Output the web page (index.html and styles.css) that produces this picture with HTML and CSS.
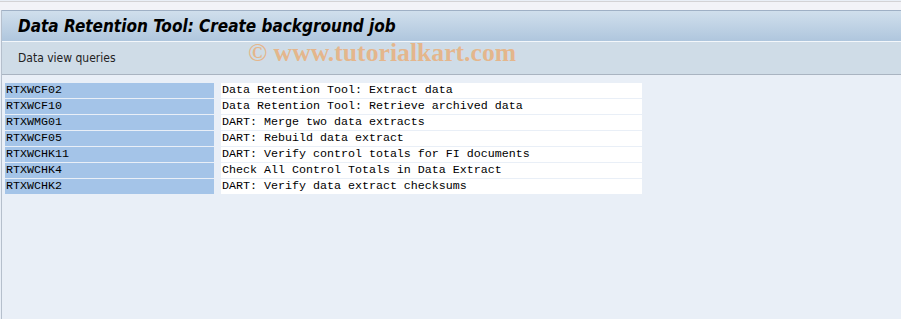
FILE: index.html
```html
<!DOCTYPE html>
<html lang="en">
<head>
  <meta charset="UTF-8" />
  <title>Data Retention Tool: Create background job</title>
  <link rel="stylesheet" href="styles.css">
</head>
<body>
  <div class="topstrip"></div>

  <div class="window">
    <header class="titlebar">
      <h1>Data Retention Tool: Create background job</h1>
    </header>

    <div class="toolbar">
      <span class="tool-btn">Data view queries</span>
      <span class="watermark">&copy; www.tutorialkart.com</span>
    </div>

    <main class="content">
      <div class="list">
        <div class="row"><span class="key">RTXWCF02</span><span class="desc">Data Retention Tool: Extract data</span></div>
        <div class="row"><span class="key">RTXWCF10</span><span class="desc">Data Retention Tool: Retrieve archived data</span></div>
        <div class="row"><span class="key">RTXWMG01</span><span class="desc">DART: Merge two data extracts</span></div>
        <div class="row"><span class="key">RTXWCF05</span><span class="desc">DART: Rebuild data extract</span></div>
        <div class="row"><span class="key">RTXWCHK11</span><span class="desc">DART: Verify control totals for FI documents</span></div>
        <div class="row"><span class="key">RTXWCHK4</span><span class="desc">Check All Control Totals in Data Extract</span></div>
        <div class="row"><span class="key">RTXWCHK2</span><span class="desc">DART: Verify data extract checksums</span></div>
      </div>
    </main>
  </div>
</body>
</html>
```

FILE: styles.css
```css
html, body {
  height: 100%;
}

body {
  margin: 0;
  background: #e9eff7;
  font-family: "DejaVu Sans Condensed", "DejaVu Sans", Tahoma, sans-serif;
  font-stretch: condensed;
  color: #000;
  display: flex;
  flex-direction: column;
  overflow: hidden;
}

.topstrip {
  height: 8px;
  border-top: 1px solid #d3d3d6;
  margin-top: 1px;
  background: #f2f3f8;
  flex: none;
}

.window {
  flex: 1;
  border-left: 1px solid #b5bfcc;
  margin-left: 1px;
  display: flex;
  flex-direction: column;
}

.titlebar {
  height: 30px;
  border-top: 1px solid #9fb0c5;
  background: linear-gradient(#d0dfec, #afc6dd);
  border-bottom: 1px solid #f3f7fb;
  display: flex;
  align-items: center;
  padding-left: 16px;
}

.titlebar h1 {
  margin: 0;
  font-size: 17px;
  font-weight: bold;
  font-style: italic;
  color: #000;
}

.toolbar {
  position: relative;
  height: 32px;
  background: #cfdce7;
  border-bottom: 1px solid #a9b4c1;
  display: flex;
  align-items: center;
  padding-left: 16px;
}

.tool-btn {
  font-size: 12px;
  color: #222;
}

.watermark {
  position: absolute;
  left: 246px;
  top: -4px;
  font-family: "Liberation Serif", "Times New Roman", serif;
  font-stretch: normal;
  font-weight: bold;
  font-size: 25.7px;
  color: rgba(235, 170, 110, 0.75);
  white-space: nowrap;
}

.content {
  flex: 1;
  padding: 8px 0 0 3px;
}

.list {
  display: flex;
  flex-direction: column;
  gap: 1px;
}

.row {
  display: flex;
  height: 15px;
  font-family: "Liberation Mono", "Courier New", monospace;
  font-stretch: normal;
  font-size: 11.67px;
  line-height: 15px;
}

.key {
  width: 208px;
  padding-left: 1px;
  background: #a4c4e8;
  flex: none;
}

.desc {
  margin-left: 7px;
  width: 420px;
  padding-left: 1px;
  background: #fff;
  flex: none;
}
```
